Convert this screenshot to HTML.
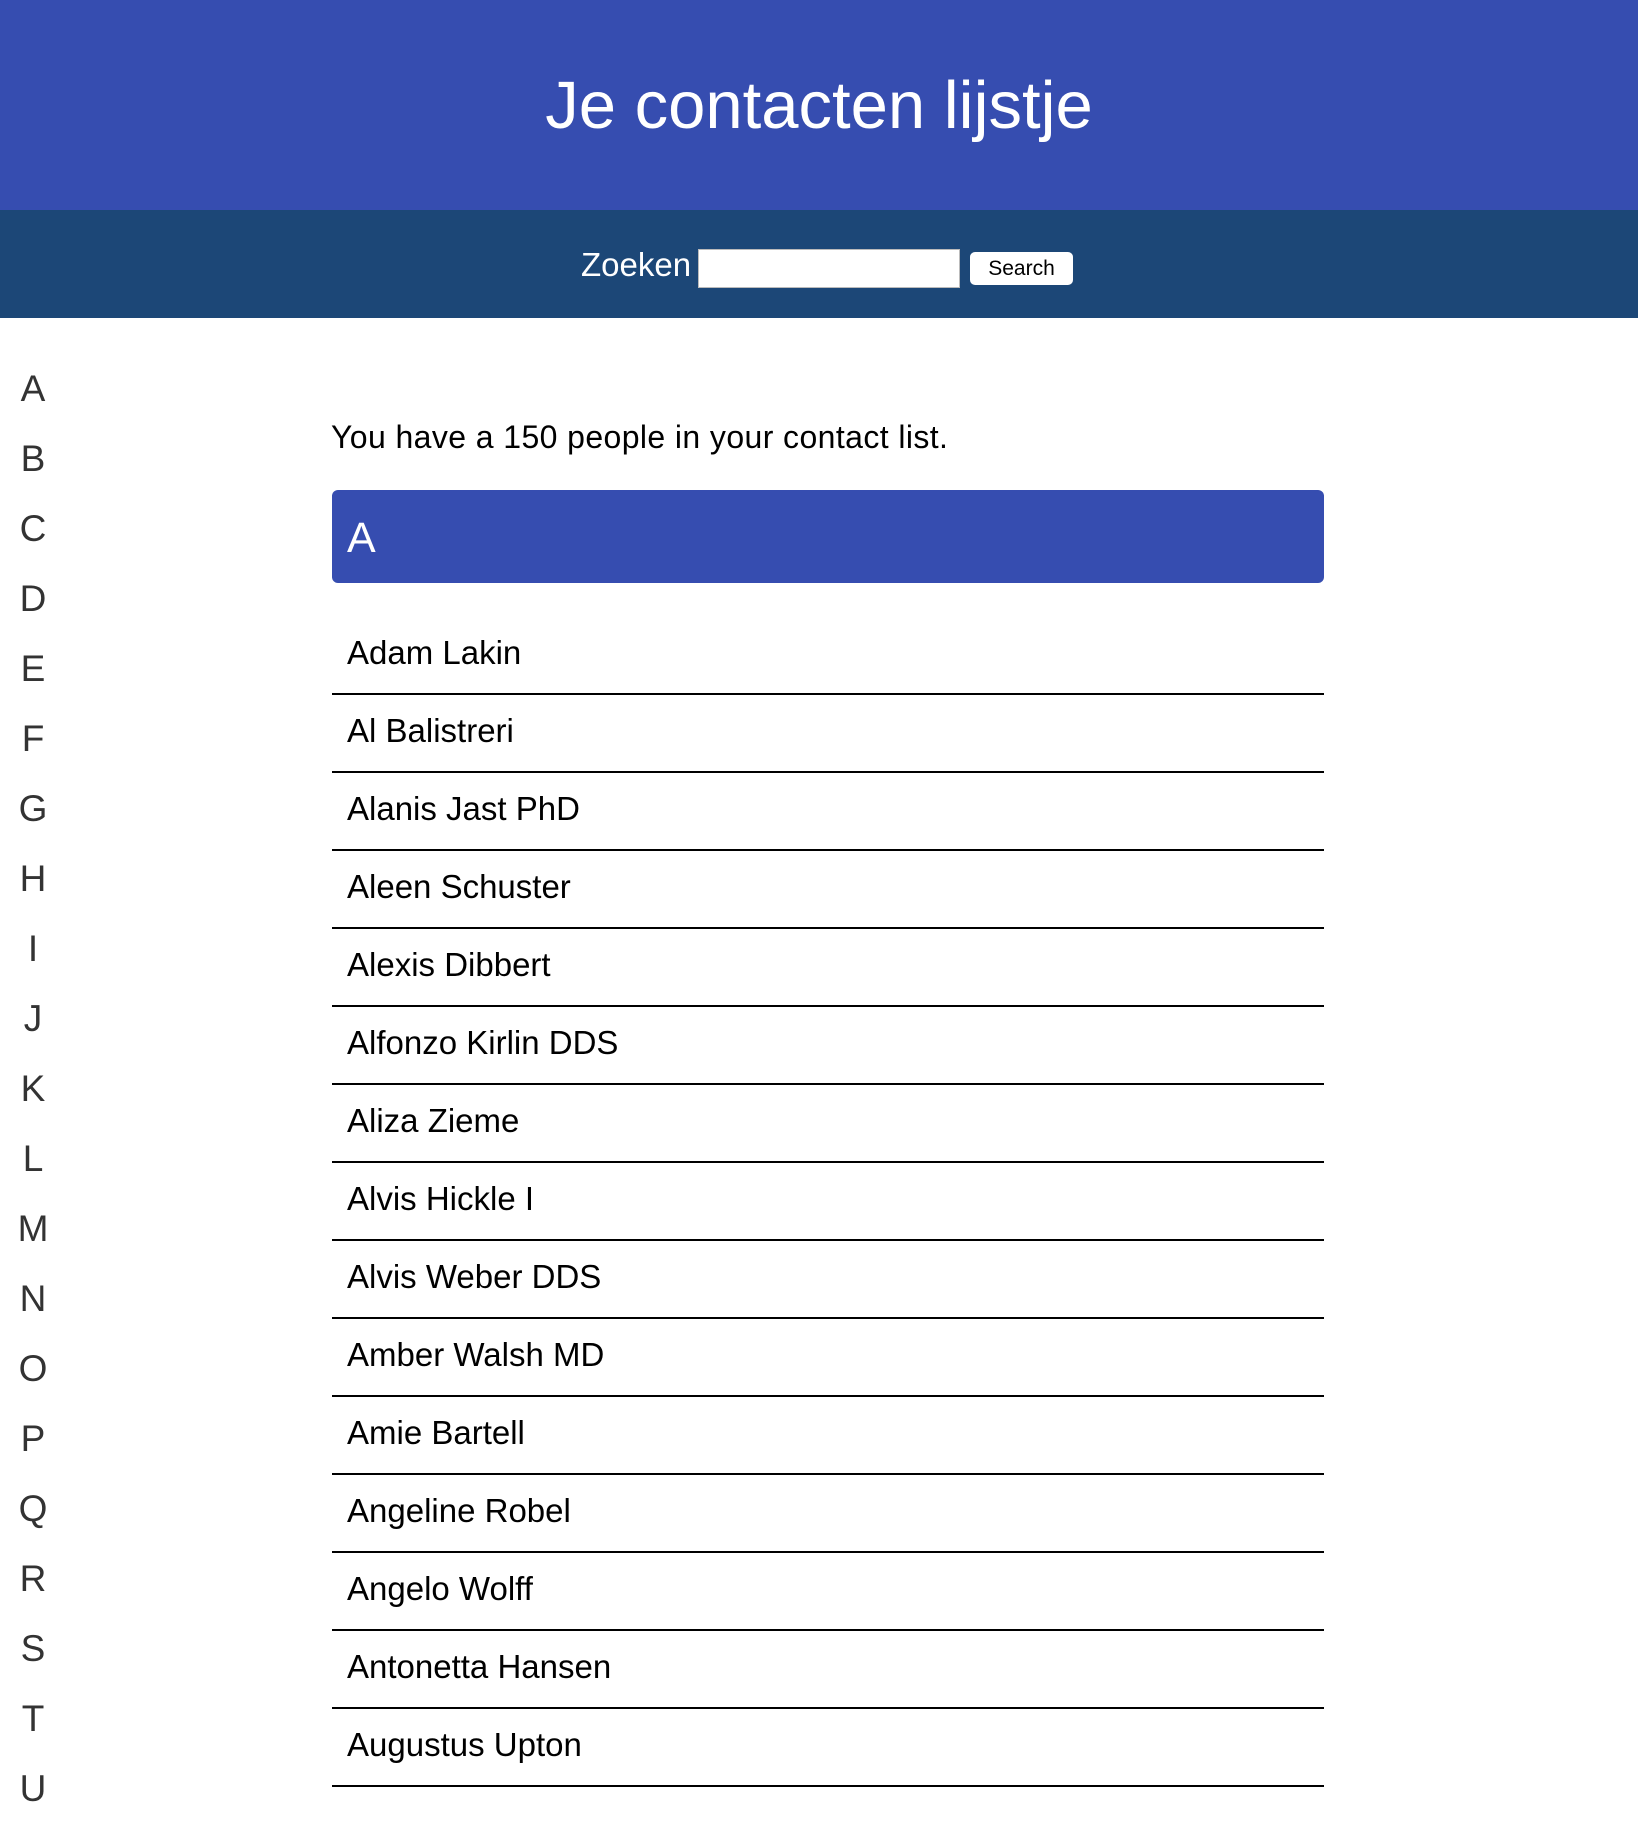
<!DOCTYPE html>
<html><head><meta charset="utf-8"><style>
*{margin:0;padding:0;box-sizing:border-box}
body{width:1638px;height:1828px;overflow:hidden;background:#fff;font-family:"Liberation Sans","DejaVu Sans",sans-serif;position:relative}
.hdr{position:absolute;left:0;top:0;width:1638px;height:210px;background:#364db0}
.hdr h1{position:absolute;left:0;width:1638px;top:66px;text-align:center;color:#fff;font-weight:normal;font-size:67px;line-height:80px}
.nav{position:absolute;left:0;top:210px;width:1638px;height:108px;background:#1c4777}
.zk{position:absolute;left:581px;top:35px;color:#fff;font-size:33px;line-height:40px}
.inp{position:absolute;left:698px;top:39px;width:262px;height:39px;background:#fff;border:1px solid #bbb}
.btn{position:absolute;left:970px;top:42px;width:103px;height:33px;background:#fff;border-radius:5px;font-size:21px;text-align:center;line-height:33px;color:#000}
.side div{position:absolute;left:0;width:66px;text-align:center;font-size:37px;color:#333;line-height:40px}
.count{position:absolute;left:331px;top:417px;font-size:32px;letter-spacing:0.4px;line-height:40px;color:#000}
.box{position:absolute;left:332px;top:490px;width:992px;height:93px;background:#364db0;border-radius:6px}
.box span{position:absolute;left:15px;top:24px;color:#fff;font-size:43px;line-height:48px}
.row{position:absolute;left:332px;width:992px;height:78px;border-bottom:2px solid #000}
.row span{position:absolute;left:15px;top:17px;font-size:33px;line-height:38px;color:#000}
</style></head><body>
<div class="hdr"><h1>Je contacten lijstje</h1></div>
<div class="nav"><div class="zk">Zoeken</div><div class="inp"></div><div class="btn">Search</div></div>
<div class="side">
<div style="top:369px">A</div><div style="top:439px">B</div><div style="top:509px">C</div><div style="top:579px">D</div><div style="top:649px">E</div><div style="top:719px">F</div><div style="top:789px">G</div><div style="top:859px">H</div><div style="top:929px">I</div><div style="top:999px">J</div><div style="top:1069px">K</div><div style="top:1139px">L</div><div style="top:1209px">M</div><div style="top:1279px">N</div><div style="top:1349px">O</div><div style="top:1419px">P</div><div style="top:1489px">Q</div><div style="top:1559px">R</div><div style="top:1629px">S</div><div style="top:1699px">T</div><div style="top:1769px">U</div>
</div>
<div class="count">You have a 150 people in your contact list.</div>
<div class="box"><span>A</span></div>
<div class="row" style="top:616px;height:79px"><span style="top:18px">Adam Lakin</span></div>
<div class="row" style="top:695px"><span>Al Balistreri</span></div>
<div class="row" style="top:773px"><span>Alanis Jast PhD</span></div>
<div class="row" style="top:851px"><span>Aleen Schuster</span></div>
<div class="row" style="top:929px"><span>Alexis Dibbert</span></div>
<div class="row" style="top:1007px"><span>Alfonzo Kirlin DDS</span></div>
<div class="row" style="top:1085px"><span>Aliza Zieme</span></div>
<div class="row" style="top:1163px"><span>Alvis Hickle I</span></div>
<div class="row" style="top:1241px"><span>Alvis Weber DDS</span></div>
<div class="row" style="top:1319px"><span>Amber Walsh MD</span></div>
<div class="row" style="top:1397px"><span>Amie Bartell</span></div>
<div class="row" style="top:1475px"><span>Angeline Robel</span></div>
<div class="row" style="top:1553px"><span>Angelo Wolff</span></div>
<div class="row" style="top:1631px"><span>Antonetta Hansen</span></div>
<div class="row" style="top:1709px"><span>Augustus Upton</span></div>
</body></html>
